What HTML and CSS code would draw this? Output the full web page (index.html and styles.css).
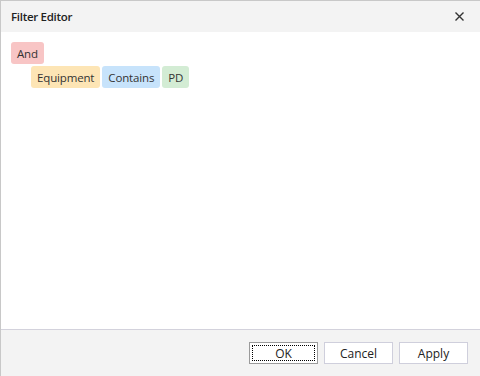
FILE: index.html
```html
<!DOCTYPE html>
<html lang="en">
<head>
    <meta charset="UTF-8">
    <title>Filter Editor</title>
    <link rel="stylesheet" href="styles.css">
</head>
<body>
    <div class="dialog">
        <div class="dialog-header">
            <span class="dialog-title">Filter Editor</span>
            <button class="close-btn" aria-label="Close">
                <svg width="9" height="9" viewBox="0 0 9 9">
                    <path d="M0.5 0.5 L8.5 8.5 M8.5 0.5 L0.5 8.5" stroke="#333" stroke-width="1.4" fill="none"/>
                </svg>
            </button>
        </div>

        <div class="dialog-body">
            <div class="filter-row">
                <span class="chip chip-group">And</span>
            </div>
            <div class="filter-row indent">
                <span class="chip chip-field">Equipment</span>
                <span class="chip chip-op">Contains</span>
                <span class="chip chip-value">PD</span>
            </div>
        </div>

        <div class="dialog-footer">
            <button class="btn btn-focused"><span class="focus-rect">OK</span></button>
            <button class="btn">Cancel</button>
            <button class="btn">Apply</button>
        </div>
    </div>
</body>
</html>
```

FILE: styles.css
```css
* {
    margin: 0;
    padding: 0;
    box-sizing: border-box;
}

body {
    font-family: 'Open Sans', 'Noto Sans', sans-serif;
    font-size: 12px;
    color: #333;
    background: #fff;
    width: 480px;
    height: 376px;
    overflow: hidden;
}

.dialog {
    display: flex;
    flex-direction: column;
    height: 100%;
    border-top: 1px solid #c8c8c8;
    border-left: 1px solid #c8c8c8;
}

.dialog-header {
    display: flex;
    align-items: center;
    justify-content: space-between;
    height: 31px;
    padding: 0 16px 0 10px;
    background: #f3f3f3;
}

.dialog-title {
    font-weight: 600;
    font-size: 11.5px;
    letter-spacing: -0.3px;
    color: #222;
}

.close-btn {
    display: flex;
    border: none;
    background: none;
    cursor: pointer;
}

.dialog-body {
    flex: 1;
    padding: 10px 10px;
    display: flex;
    flex-direction: column;
    gap: 2px;
}

.filter-row {
    display: flex;
    gap: 2px;
}

.filter-row.indent {
    padding-left: 20px;
}

.chip {
    display: inline-flex;
    align-items: center;
    height: 22px;
    padding: 0 6px;
    border-radius: 3px;
    font-size: 11.5px;
    letter-spacing: -0.15px;
    color: #333;
}

.chip-group {
    background: #f8c5c5;
}

.chip-field {
    background: #fde5b5;
}

.chip-op {
    background: #c7e3fb;
}

.chip-value {
    background: #d3ecd4;
}

.dialog-footer {
    display: flex;
    justify-content: flex-end;
    gap: 6px;
    height: 47px;
    padding: 12px 12px 0 0;
    background: #f3f3f3;
    border-top: 1px solid #d3d2dc;
}

.btn {
    width: 69px;
    height: 22px;
    background: #fff;
    border: 1px solid #cfcfdc;
    font-family: inherit;
    font-size: 12px;
    color: #222;
    cursor: pointer;
}

.btn-focused {
    border-color: #9a9a9a;
    padding: 2px;
}

.focus-rect {
    display: flex;
    align-items: center;
    justify-content: center;
    height: 100%;
    border: 1px dotted #000;
}
```
